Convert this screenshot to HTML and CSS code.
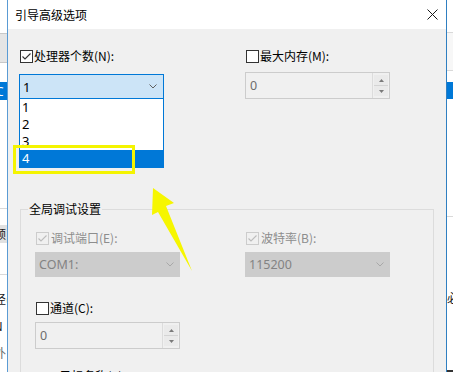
FILE: index.html
```html
<!DOCTYPE html>
<html lang="zh-CN">
<head>
<meta charset="utf-8">
<title>引导高级选项</title>
<link rel="stylesheet" href="styles.css">
</head>
<body>
<div class="screen">
  <div class="bg-left">
    <div class="blk h33"></div>
    <div class="lgray"></div>
    <div class="blk h19"></div>
    <div class="lsel"><span class="frag-w">C</span></div>
    <div class="blk h108"></div>
    <div class="hline"></div>
    <div class="blk h16"></div>
    <div class="lgray2"><span class="frag">顿</span></div>
    <div class="blk h31"></div>
    <div class="hline"></div>
    <div class="blk h16"></div>
    <div class="ltext"><span class="frag">径(</span></div>
    <div class="blk h11"></div>
    <div class="ltext"><span class="frag">N</span></div>
    <div class="blk h11"></div>
    <div class="ltext gray"><span class="frag">外</span></div>
  </div>

  <div class="dialog">
    <div class="titlebar">
      <span class="title">引导高级选项</span>
      <svg class="close" width="11" height="11" viewBox="0 0 11 11"><path d="M0.5 0.5 L10.5 10.5 M10.5 0.5 L0.5 10.5" stroke="#1a1a1a" stroke-width="1" fill="none"/></svg>
    </div>
    <div class="body">
      <div class="toprow">
        <div class="col">
          <div class="chk">
            <span class="box on"><svg width="11" height="11" viewBox="0 0 11 11"><path d="M1.5 5.5 L4 8 L9.5 2.5" stroke="#333" stroke-width="1.1" fill="none"/></svg></span>
            <span>处理器个数(N):</span>
          </div>
          <div class="combo-wrap">
            <div class="combo active">
              <span>1</span>
              <svg width="8" height="5" viewBox="0 0 8 5"><path d="M0.5 0.5 L4 4 L7.5 0.5" stroke="#606060" stroke-width="1" fill="none"/></svg>
            </div>
            <ul class="droplist">
              <li>1</li>
              <li>2</li>
              <li>3</li>
              <li class="sel">4</li>
            </ul>
          </div>
        </div>
        <div class="col">
          <div class="chk">
            <span class="box"></span>
            <span>最大内存(M):</span>
          </div>
          <div class="spin">
            <span class="spin-val">0</span>
            <div class="spin-btns">
              <div class="sb"><svg width="5" height="3" viewBox="0 0 5 3"><path d="M0 3 L2.5 0 L5 3 Z" fill="#7a7a7a"/></svg></div>
              <div class="sb"><svg width="5" height="3" viewBox="0 0 5 3"><path d="M0 0 L2.5 3 L5 0 Z" fill="#7a7a7a"/></svg></div>
            </div>
          </div>
        </div>
      </div>

      <div class="group">
        <div class="legend">全局调试设置</div>
        <div class="grow first">
          <div class="col">
            <div class="chk dis">
              <span class="box dis"><svg width="11" height="11" viewBox="0 0 11 11"><path d="M1.5 5.5 L4 8 L9.5 2.5" stroke="#bcbcbc" stroke-width="1.1" fill="none"/></svg></span>
              <span>调试端口(E):</span>
            </div>
            <div class="combo dis">
              <span>COM1:</span>
              <svg width="8" height="5" viewBox="0 0 8 5"><path d="M0.5 0.5 L4 4 L7.5 0.5" stroke="#a8a8a8" stroke-width="1" fill="none"/></svg>
            </div>
          </div>
          <div class="col">
            <div class="chk dis">
              <span class="box dis"><svg width="11" height="11" viewBox="0 0 11 11"><path d="M1.5 5.5 L4 8 L9.5 2.5" stroke="#bcbcbc" stroke-width="1.1" fill="none"/></svg></span>
              <span>波特率(B):</span>
            </div>
            <div class="combo dis">
              <span>115200</span>
              <svg width="8" height="5" viewBox="0 0 8 5"><path d="M0.5 0.5 L4 4 L7.5 0.5" stroke="#a8a8a8" stroke-width="1" fill="none"/></svg>
            </div>
          </div>
        </div>
        <div class="grow second">
          <div class="col">
            <div class="chk">
              <span class="box"></span>
              <span>通道(C):</span>
            </div>
            <div class="spin tall">
              <span class="spin-val">0</span>
              <div class="spin-btns">
                <div class="sb"><svg width="5" height="3" viewBox="0 0 5 3"><path d="M0 3 L2.5 0 L5 3 Z" fill="#7a7a7a"/></svg></div>
                <div class="sb"><svg width="5" height="3" viewBox="0 0 5 3"><path d="M0 0 L2.5 3 L5 0 Z" fill="#7a7a7a"/></svg></div>
              </div>
            </div>
          </div>
        </div>
        <div class="usb">USB 目标名称(T):</div>
      </div>
    </div>
  </div>

  <div class="bg-right">
    <div class="blk h32"></div>
    <div class="hline"></div>
    <div class="rpanel"></div>
    <div class="hline"></div>
    <div class="blk h11"></div>
    <div class="rsel"></div>
    <div class="blk h117"></div>
    <div class="hline"></div>
    <div class="blk h73"></div>
    <div class="rtext"><span>必</span></div>
    <div class="spacer"></div>
    <div class="dline"></div>
  </div>

  <div class="highlight"></div>
  <svg class="arrow" width="453" height="372" viewBox="0 0 453 372">
    <polygon points="153,188 174,203 166,206 192,271 158,212 152,215" fill="#f6f600"/>
  </svg>
</div>
</body>
</html>
```

FILE: styles.css
```css
* { box-sizing: border-box; }
html, body { margin: 0; padding: 0; background: #ffffff; }
body {
  font-family: "Noto Sans CJK SC", "Noto Sans", sans-serif;
  font-size: 12px;
  color: #1a1a1a;
}
.screen {
  position: relative;
  width: 453px;
  height: 372px;
  overflow: hidden;
  display: flex;
}

/* background windows */
.bg-left {
  width: 7px;
  flex: none;
  display: flex;
  flex-direction: column;
  background: #fff;
  overflow: hidden;
}
.bg-right {
  flex: 1;
  display: flex;
  flex-direction: column;
  background: #fff;
  overflow: hidden;
}
.blk { flex: none; }
.h11 { height: 11px; }
.h16 { height: 16px; }
.h19 { height: 19px; }
.h31 { height: 31px; }
.h32 { height: 32px; }
.h33 { height: 33px; }
.h73 { height: 73px; }
.h108 { height: 108px; }
.h117 { height: 117px; }
.hline { height: 1px; background: #d9d9d9; flex: none; }
.dline { height: 2px; background: #333; flex: none; }
.spacer { flex: 1; }
.lgray {
  height: 30px;
  background: #e5e5e5;
  border-top: 1px solid #c8c8c8;
  border-bottom: 1px solid #c8c8c8;
  flex: none;
}
.lsel {
  height: 18px;
  background: #0078d7;
  flex: none;
  line-height: 18px;
  overflow: hidden;
  white-space: nowrap;
}
.lgray2 {
  height: 18px;
  background: #e1e1e1;
  flex: none;
  line-height: 18px;
  overflow: hidden;
  white-space: nowrap;
}
.ltext {
  height: 16px;
  line-height: 16px;
  flex: none;
  overflow: hidden;
  white-space: nowrap;
}
.ltext.gray { color: #666; }
.frag, .frag-w {
  display: inline-block;
  margin-left: -6px;
  font-size: 12px;
}
.frag-w { color: #fff; font-family: "Noto Sans", sans-serif; margin-left: -4px; }
.rpanel { height: 37px; background: #f7f7f7; flex: none; }
.rsel { height: 17px; background: #0078d7; flex: none; }
.rtext {
  height: 16px;
  line-height: 16px;
  flex: none;
  overflow: hidden;
  white-space: nowrap;
}

/* dialog */
.dialog {
  width: 440px;
  flex: none;
  border-left: 1px solid #5a9bd4;
  border-right: 1px solid #2f7fc1;
  background: #f0f0f0;
  display: flex;
  flex-direction: column;
}
.titlebar {
  height: 29px;
  flex: none;
  background: #fff;
  display: flex;
  align-items: center;
  justify-content: space-between;
  padding: 0 8px 0 7px;
}
.title { font-size: 12px; line-height: 16px; color: #000; }
.close { display: block; }

.body {
  flex: 1;
  display: flex;
  flex-direction: column;
  padding: 19px 0 0 11px;
}
.toprow { display: flex; gap: 81px; }
.col { width: 145px; display: flex; flex-direction: column; }

.chk {
  display: flex;
  align-items: center;
  gap: 1px;
  height: 16px;
  line-height: 16px;
  white-space: nowrap;
  color: #000;
}
.chk.dis { color: #8d8d8d; gap: 2px; }
.box {
  width: 13px;
  height: 13px;
  flex: none;
  margin-left: 1px;
  border: 1px solid #333;
  background: #fff;
  display: flex;
  align-items: center;
  justify-content: center;
}
.box svg { display: block; }
.box.dis { border-color: #cccccc; background: #f0f0f0; }

.combo-wrap { position: relative; }
.combo {
  margin-top: 10px;
  height: 25px;
  border: 1px solid #cccccc;
  display: flex;
  align-items: center;
  justify-content: space-between;
  padding: 0 6px 0 3px;
  font-family: "Noto Sans", sans-serif;
  font-size: 13px;
}
.combo svg { display: block; }
.combo.active {
  border-color: #0078d7;
  background: #cce4f7;
  color: #000;
}
.combo.dis {
  margin-top: 6px;
  background: #cccccc;
  border-color: #cccccc;
  color: #838383;
  font-size: 12.5px;
  padding: 0 5px 0 3px;
}
.droplist {
  position: absolute;
  top: 35px;
  left: 0;
  width: 145px;
  margin: 0;
  padding: 0;
  list-style: none;
  background: #fff;
  border: 1px solid #0078d7;
  border-top: none;
  font-family: "Noto Sans", sans-serif;
  font-size: 13px;
  color: #000;
  z-index: 2;
}
.droplist li {
  height: 17px;
  line-height: 17px;
  padding-left: 2px;
}
.droplist li.sel { background: #0078d7; color: #fff; }

.spin {
  margin-top: 8px;
  height: 27px;
  border: 1px solid #cccccc;
  background: #f0f0f0;
  display: flex;
  align-items: stretch;
  justify-content: space-between;
}
.spin.tall { margin-top: 6px; }
.spin-val {
  padding-left: 4px;
  align-self: center;
  font-family: "Noto Sans", sans-serif;
  font-size: 12.5px;
  color: #6d6d6d;
}
.spin-btns {
  width: 17px;
  border-left: 1px solid #dcdcdc;
  display: flex;
  flex-direction: column;
  padding: 2px 1px;
}
.sb {
  flex: 1;
  display: flex;
  align-items: center;
  justify-content: center;
  background: #eaeaea;
}
.sb + .sb { border-top: 1px solid #d4d4d4; }
.sb svg { display: block; }

/* group box */
.group {
  margin-top: 110px;
  margin-left: 1px;
  width: 414px;
  flex: 1;
  border: 1px solid #dcdcdc;
  border-bottom: none;
  padding-left: 14px;
  display: flex;
  flex-direction: column;
}
.legend {
  align-self: flex-start;
  margin-top: -9px;
  margin-left: -7px;
  padding: 0 1px;
  height: 16px;
  line-height: 16px;
  background: #f0f0f0;
  color: #000;
}
.grow { display: flex; gap: 65px; }
.grow.first { margin-top: 13px; }
.grow.second { margin-top: 23px; }
.usb {
  margin-top: 19px;
  margin-left: -2px;
  height: 16px;
  line-height: 16px;
  color: #000;
  white-space: nowrap;
}

/* annotations */
.highlight {
  position: absolute;
  left: 13px;
  top: 145px;
  width: 122px;
  height: 29px;
  border: 3px solid #f4f400;
  z-index: 3;
}
.arrow {
  position: absolute;
  left: 0;
  top: 0;
  z-index: 4;
  pointer-events: none;
}
```
